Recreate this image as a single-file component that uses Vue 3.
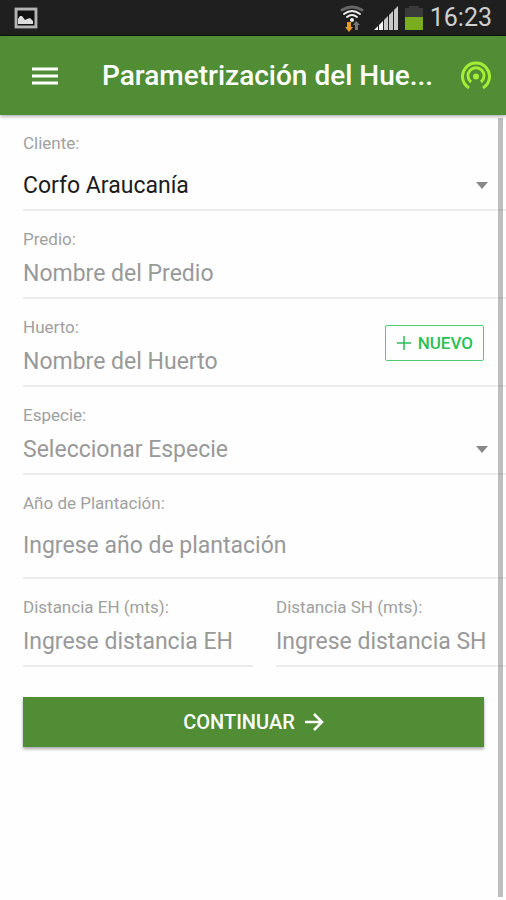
<script setup>
import { reactive } from 'vue'

const form = reactive({
  client: 'corfo',
  estate: '',
  orchard: '',
  species: '',
  year: '',
  distanceEh: '',
  distanceSh: ''
})
</script>

<template>
  <div class="screen">
    <!-- Phone status bar -->
    <div class="status">
      <svg class="picture" width="26" height="24" viewBox="0 0 26 24">
        <rect x="1" y="1" width="24" height="22" rx="1" fill="#000" />
        <rect x="3" y="3" width="20" height="18" fill="#111" stroke="#b4b4b4" stroke-width="3" />
        <path d="M5 18v-5l2-3h2l3 4 2-1 3-1 3 3v3z" fill="#dcdcdc" />
      </svg>
      <svg width="26" height="28" viewBox="0 0 26 28">
        <g fill="none" stroke-linecap="round">
          <path d="M3 6q10-6 20 0" stroke="#666" stroke-width="3" />
          <path d="M5 10q8-6 16 0" stroke="#eee" stroke-width="2" />
          <path d="M8 13q5-4 10 0" stroke="#eee" stroke-width="2" />
        </g>
        <circle cx="13" cy="16" r="2" fill="#eee" />
        <path d="M8 18h4v5h2l-4 5-4-5h2z" fill="#e39a2d" />
        <path d="M17 17l4 4h-2v5h-3v-5h-2z" fill="#777" />
      </svg>
      <svg class="signal" width="24" height="24" viewBox="0 0 24 24">
        <path d="M0 24l4-4v4zM5 24v-5l4-4v9z" fill="#f2f2f2" />
        <path d="M10 24V14l4-4v14zM15 24V9l4-4v19zM20 24V4l4-4v24z" fill="#c8c8c8" />
      </svg>
      <svg class="battery" width="18" height="24" viewBox="0 0 18 24">
        <path d="M4 0h10v2h4v9H0V2h4z" fill="#3a3a3a" />
        <path d="M0 11h18v13H0z" fill="#79ad1d" />
      </svg>
      <span class="clock">16:23</span>
    </div>

    <header class="toolbar">
      <button type="button" class="iconButton" aria-label="Menú">
        <svg width="28" height="20" viewBox="0 0 28 20">
          <path d="M1 3h26M1 10h26M1 17h26" stroke="#fff" stroke-width="3" />
        </svg>
      </button>
      <h1>Parametrización del Hue...</h1>
      <button type="button" class="iconButton" aria-label="Conexión">
        <svg width="30" height="30" viewBox="0 0 30 30" fill="none" stroke="#a4ef36" stroke-width="3">
          <path d="M8 27a13.500 13.500 0 1 1 14 0" />
          <path d="M10 21a8 8 0 1 1 10 0" />
          <circle cx="15" cy="15.500" r="3" fill="#a4ef36" stroke="none" />
        </svg>
      </button>
    </header>

    <form @submit.prevent>
      <div class="field tall">
        <label for="client">Cliente:</label>
        <select id="client" v-model="form.client">
          <option value="corfo">Corfo Araucanía</option>
        </select>
      </div>

      <div class="field">
        <label for="estate">Predio:</label>
        <input id="estate" v-model="form.estate" type="text" placeholder="Nombre del Predio">
      </div>

      <div class="field withAction">
        <div class="grow">
          <label for="orchard">Huerto:</label>
          <input id="orchard" v-model="form.orchard" type="text" placeholder="Nombre del Huerto">
        </div>
        <button type="button" class="newButton">
          <svg width="16" height="16" viewBox="0 0 16 16">
            <path d="M8 1v14M1 8h14" stroke="currentColor" stroke-width="1.500" />
          </svg>
          <span>NUEVO</span>
        </button>
      </div>

      <div class="field">
        <label for="species">Especie:</label>
        <select id="species" v-model="form.species" class="empty">
          <option value="">Seleccionar Especie</option>
        </select>
      </div>

      <div class="field tall spaced">
        <label for="year">Año de Plantación:</label>
        <input id="year" v-model="form.year" type="text" placeholder="Ingrese año de plantación">
      </div>

      <div class="columns">
        <div class="field">
          <label for="distanceEh">Distancia EH (mts):</label>
          <input id="distanceEh" v-model="form.distanceEh" type="text" placeholder="Ingrese distancia EH">
        </div>
        <div class="field">
          <label for="distanceSh">Distancia SH (mts):</label>
          <input id="distanceSh" v-model="form.distanceSh" type="text" placeholder="Ingrese distancia SH">
        </div>
      </div>

      <button type="submit" class="submit">
        <span>CONTINUAR</span>
        <svg width="20" height="20" viewBox="0 0 20 20" fill="none" stroke="#fff" stroke-width="2.500">
          <path d="M1 10h17M10 2l8 8-8 8" />
        </svg>
      </button>

      <!-- Scroll indicator -->
      <div class="scrollbar"></div>
    </form>
  </div>
</template>

<style>
body {
  background: #fefefe;
}
</style>

<style scoped>
.screen {
  display: flex;
  flex-direction: column;
  min-height: 100vh;
  font-family: Roboto, sans-serif;
}

.status {
  display: flex;
  align-items: center;
  box-sizing: border-box;
  height: 36px;
  padding: 0 14px 0 13px;
  background: #1f1f1f;
  border-bottom: 1px solid #0b140b;
}
.picture {
  margin-right: auto;
}
.signal {
  margin-left: 9px;
}
.battery {
  margin: 0 7px;
}
.clock {
  color: #cfcfcf;
  font-size: 25px;
  line-height: 36px;
}

.toolbar {
  display: flex;
  align-items: center;
  height: 79px;
  padding: 0 15px 0 31px;
  background: #508d34;
  box-shadow: 0 1px 4px rgba(0, 0, 0, 0.4);
}
h1 {
  flex: 1;
  margin: 0 0 0 43px;
  color: #fff;
  font-size: 28px;
  font-weight: 500;
  white-space: nowrap;
}
.iconButton {
  display: flex;
  padding: 0;
  border: 0;
  background: none;
}

form {
  position: relative;
  flex: 1;
}
.field {
  margin-left: 23px;
  padding: 18px 0 4px;
  border-bottom: 2px solid #ececec;
}
label {
  display: block;
  color: #a0a0a0;
  font-size: 17px;
  line-height: 20px;
}
input,
select {
  display: block;
  box-sizing: border-box;
  width: 100%;
  height: 40px;
  margin: 4px 0 0;
  padding: 0;
  border: 0;
  outline: none;
  background: none;
  color: #1c1c1c;
  font-family: inherit;
  font-size: 23px;
}
input::placeholder,
.empty {
  color: #999;
}
select {
  appearance: none;
  background: url("data:image/svg+xml,%3csvg xmlns='http://www.w3.org/2000/svg' viewBox='0 0 12 7'%3e%3cpath fill='%23888888' d='M0 0h12L6 7z'/%3e%3c/svg%3e") no-repeat right 18px center / 12px 7px;
}
.tall {
  padding-bottom: 0;
}
.tall input,
.tall select {
  height: 48px;
  margin-top: 8px;
}
.spaced {
  padding-bottom: 8px;
}

.withAction {
  display: flex;
  align-items: flex-start;
}
.grow {
  flex: 1;
}
.newButton {
  display: flex;
  align-items: center;
  justify-content: center;
  gap: 6px;
  height: 36px;
  margin: 8px 22px 0 0;
  padding: 0 10px;
  border: 1px solid #52cb78;
  border-radius: 2px;
  background: none;
  color: #2cbf55;
  font-family: inherit;
  font-size: 17px;
  font-weight: 500;
}

.columns {
  display: grid;
  grid-template-columns: 1fr 1fr;
}

.submit {
  display: flex;
  align-items: center;
  justify-content: center;
  gap: 9px;
  width: calc(100% - 45px);
  height: 50px;
  margin: 30px 22px 0 23px;
  border: 0;
  background: #508d34;
  box-shadow: 0 2px 3px rgba(0, 0, 0, 0.35);
  color: #fff;
  font-family: inherit;
  font-size: 20px;
  font-weight: 500;
}

.scrollbar {
  position: absolute;
  top: 3px;
  right: 3px;
  bottom: 3px;
  width: 5px;
  background: rgba(0, 0, 0, 0.25);
}
</style>
